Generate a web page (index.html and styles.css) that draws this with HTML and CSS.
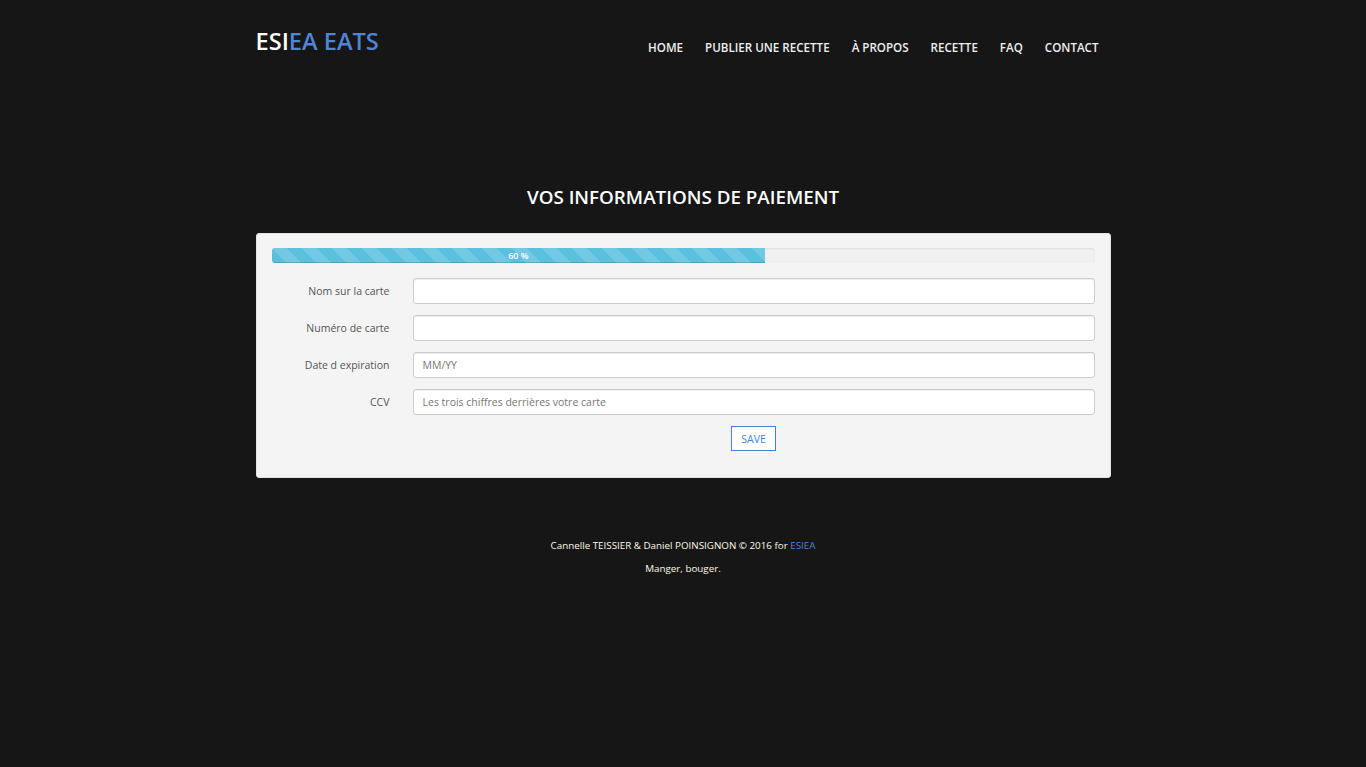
FILE: index.html
```html
<!DOCTYPE html>
<html lang="fr">
<head>
<meta charset="utf-8">
<title>ESIEA EATS - Paiement</title>
<link rel="stylesheet" href="styles.css">
</head>
<body>
<div class="wrap">
  <header class="header">
    <div class="logo"><span class="logo-white">ESI</span><span class="logo-blue">EA EATS</span></div>
    <nav class="nav">
      <a href="#">HOME</a>
      <a href="#">PUBLIER UNE RECETTE</a>
      <a href="#">À PROPOS</a>
      <a href="#">RECETTE</a>
      <a href="#">FAQ</a>
      <a href="#">CONTACT</a>
    </nav>
  </header>

  <h1 class="title">VOS INFORMATIONS DE PAIEMENT</h1>

  <section class="panel">
    <div class="progress"><div class="progress-bar" style="width:60%">60 %</div></div>
    <form class="form">
      <div class="row"><label>Nom sur la carte</label><input type="text"></div>
      <div class="row"><label>Numéro de carte</label><input type="text"></div>
      <div class="row"><label>Date d expiration</label><input type="text" placeholder="MM/YY"></div>
      <div class="row"><label>CCV</label><input type="text" placeholder="Les trois chiffres derrières votre carte"></div>
      <div class="row actions"><span></span><div class="btn-wrap"><button type="button" class="btn">SAVE</button></div></div>
    </form>
  </section>

  <footer class="footer">
    <p>Cannelle TEISSIER &amp; Daniel POINSIGNON © 2016 for <a href="#">ESIEA</a></p>
    <p>Manger, bouger.</p>
  </footer>
</div>
</body>
</html>
```

FILE: styles.css
```css
* { box-sizing: border-box; }
html, body { margin: 0; padding: 0; }
body {
  background: #161616;
  font-family: "Open Sans", "Noto Sans", sans-serif;
  color: #fff;
  min-height: 767px;
}
.wrap {
  width: 855px;
  margin: 0 auto;
}
.header {
  display: flex;
  justify-content: space-between;
  align-items: flex-start;
  padding-top: 25px;
  height: 110px;
}
.logo {
  font-size: 23.6px;
  font-weight: 600;
  line-height: 32px;
}
.logo-white { color: #fff; }
.logo-blue { color: #4f84d6; }
.nav {
  display: flex;
  gap: 22px;
  padding-top: 15px;
  margin-right: 12px;
}
.nav a {
  color: #eee;
  text-decoration: none;
  font-size: 11.6px;
  font-weight: 600;
  line-height: 16px;
}
.title {
  margin: 74px 0 0;
  text-align: center;
  font-size: 18.8px;
  font-weight: 600;
  line-height: 26px;
  color: #fff;
}
.panel {
  margin-top: 23px;
  background: #f4f4f4;
  border: 1px solid #e3e3e3;
  border-radius: 3px;
  padding: 14px 15px 26px;
}
.progress {
  height: 15px;
  background: #f0f0f0;
  border-radius: 3px;
  box-shadow: inset 0 1px 2px rgba(0,0,0,0.08);
  overflow: hidden;
}
.progress-bar {
  height: 100%;
  background-color: #5bc0de;
  background-image: linear-gradient(45deg, rgba(255,255,255,0.15) 25%, transparent 25%, transparent 50%, rgba(255,255,255,0.15) 50%, rgba(255,255,255,0.15) 75%, transparent 75%, transparent);
  background-size: 30px 30px;
  color: #fff;
  font-size: 9px;
  line-height: 15px;
  text-align: center;
  font-weight: 600;
  box-shadow: inset 0 -1px 0 rgba(0,0,0,0.15);
}
.form {
  margin-top: 15px;
  display: flex;
  flex-direction: column;
  gap: 11px;
}
.row {
  display: grid;
  grid-template-columns: 118px 1fr;
  column-gap: 23px;
  align-items: center;
}
.row label {
  text-align: right;
  font-size: 10.5px;
  color: #555;
  font-weight: 400;
}
.row input {
  height: 26px;
  border: 1px solid #ccc;
  border-radius: 3px;
  background: #fff;
  padding: 0 9px;
  font-family: "Open Sans", "Noto Sans", sans-serif;
  font-size: 10.5px;
  color: #555;
  box-shadow: inset 0 1px 1px rgba(0,0,0,0.075);
  width: 100%;
}
.row input::placeholder { color: #777; }
.actions { margin-top: 0; }
.btn-wrap { display: flex; justify-content: center; }
.btn {
  height: 25px;
  padding: 0 9px;
  border: 1px solid #4a7fd0;
  background: #fff;
  color: #4a7fd0;
  font-family: "Open Sans", "Noto Sans", sans-serif;
  font-size: 10.5px;
  border-radius: 0;
}
.footer {
  margin-top: 62px;
  text-align: center;
  font-size: 9.8px;
  color: #fdfbe8;
}
.footer p { margin: 0 0 12px; line-height: 11px; }
.footer a { color: #4f84d6; text-decoration: none; }
```
